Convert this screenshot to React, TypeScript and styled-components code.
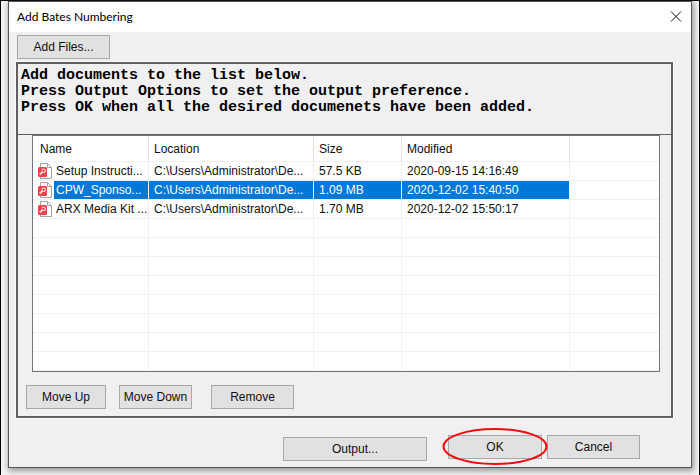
import React, { useState } from "react";
import styled, { createGlobalStyle } from "styled-components";

const GlobalStyle = createGlobalStyle`
  *, *::before, *::after { box-sizing: border-box; }
  body {
    margin: 0;
    background: #fff;
    color: #101010;
    font: 12px/16px "Liberation Sans", Arial, sans-serif;
  }
`;

const Desktop = styled.div`
  min-height: 100vh;
  padding: 0 7px 7px;
  display: flex;
  border: 1px solid #000;
  background: #f6f5f6;
`;

const Dialog = styled.main`
  flex: 1;
  min-width: 0;
  display: flex;
  flex-direction: column;
  background: #f0f0f0;
  border: 1px solid #58585a;
  box-shadow: 1px 2px 6px 1px rgba(60, 55, 60, 0.5);
`;

const TitleBar = styled.header`
  height: 30px;
  padding: 0 9px 0 8px;
  display: flex;
  align-items: center;
  justify-content: space-between;
  background: #fff;
`;

const Title = styled.h1`
  margin: 0;
  font: 400 12px/16px Lato, "Open Sans", sans-serif;
  color: #000;
`;

const CloseButton = styled.button`
  width: 12px;
  height: 12px;
  padding: 0;
  border: 0;
  display: flex;
  background: transparent;
`;

const Toolbar = styled.div`
  padding: 3px 8px;
  display: flex;
`;

const Button = styled.button<{ $width: number }>`
  width: ${(p) => p.$width}px;
  height: 24px;
  padding: 0;
  border: 1px solid #a8a8a8;
  background: #e1e1e1;
  color: #101010;
  font: inherit;
  white-space: nowrap;
`;

const Group = styled.section`
  margin: 0 18px 0 7px;
  border: 2px solid #606060;
  outline: 1px solid #fafafa;
`;

const Instructions = styled.p`
  margin: 0;
  padding: 4px 3px 18px;
  border-bottom: 1px solid #606060;
  color: #000;
  font: 700 15px/16px "Liberation Mono", "Courier New", monospace;
`;

const ListFrame = styled.div`
  margin: 0 11px 0 14px;
  border: 1px solid #72757f;
  background: #fff;
`;

const FileTable = styled.table`
  width: 100%;
  table-layout: fixed;
  border-collapse: separate;
  border-spacing: 0;
`;

const Column = styled.col<{ $width?: number }>`
  width: ${(p) => (p.$width ? `${p.$width}px` : "auto")};
`;

const HeadCell = styled.th`
  height: 26px;
  padding: 1px 5px 0;
  border-bottom: 1px solid #f0f0f0;
  border-right: 1px solid #e2e2e2;
  font-weight: 400;
  text-align: left;

  &:first-child { padding-left: 7px; }
`;

const Row = styled.tr<{ $selected?: boolean }>`
  color: ${(p) => (p.$selected ? "#fff" : "inherit")};
  --fill: ${(p) => (p.$selected ? "#0078d7" : "transparent")};
`;

const Cell = styled.td`
  height: 19px;
  padding: 0 0 0 5px;
  border-right: 1px solid #f0f0f0;
  border-bottom: 1px solid #f0f0f0;
  background: var(--fill);
  background-clip: padding-box;
  line-height: 18px;
  white-space: nowrap;
`;

const FillerCell = styled.td`
  border-bottom: 1px solid #f0f0f0;
`;

const NameCell = styled(Cell)`
  background: none;
`;

const NameContent = styled.div`
  display: flex;
  gap: 2px;
`;

const NameText = styled.span`
  flex: 1;
  padding-left: 2px;
  background: var(--fill);
`;

const ListActions = styled.div`
  padding: 13px 8px 7px;
  display: flex;
`;

const Gap = styled.span<{ $width: number }>`
  width: ${(p) => p.$width}px;
`;

const Footer = styled.footer`
  padding: 17px 51px 6px 0;
  display: flex;
  justify-content: flex-end;
`;

const OutputSlot = styled.div`
  margin: 2px 21px 0 0;
`;

const Highlighted = styled.div`
  position: relative;
  margin-right: 5px;
`;

const Ring = styled.svg`
  position: absolute;
  left: -6px;
  top: -8px;
  pointer-events: none;
`;

const PdfIcon = () => (
  <svg width="14" height="18" viewBox="0 0 14 18" aria-hidden="true">
    <path d="M2.5 1.5h7l4 4v11h-11z" fill="#fff" stroke="#a3a3a3" />
    <path d="M9.5 1.5v4h4" fill="none" stroke="#a3a3a3" />
    <rect x="0" y="5" width="9" height="10" rx="1.5" fill="#e9434a" />
    <path
      d="M3.8 7.2h1.9a1.6 1.6 0 0 1 0 3.4H3.4M4.1 8.6l-.7 3.2c-.3 1.2-1.7.9-1.5-.1.2-.7.9-1 1.8-1.1"
      fill="none"
      stroke="#fff"
      strokeWidth="1"
    />
  </svg>
);

const files = [
  { name: "Setup Instructi...", size: "57.5 KB", modified: "2020-09-15 14:16:49" },
  { name: "CPW_Sponso...", size: "1.09 MB", modified: "2020-12-02 15:40:50" },
  { name: "ARX Media Kit ...", size: "1.70 MB", modified: "2020-12-02 15:50:17" },
];
const location = "C:\\Users\\Administrator\\De...";
const emptyRows = Array.from({ length: 8 }, (_, i) => i);

export default function App() {
  const [selected, setSelected] = useState(1);

  return (
    <>
      <GlobalStyle />
      <Desktop>
        <Dialog aria-label="Add Bates Numbering">
          <TitleBar>
            <Title>Add Bates Numbering</Title>
            <CloseButton aria-label="Close">
              <svg width="12" height="12" viewBox="0 0 12 12">
                <path d="M1 0.5l10 10M11 0.5l-10 10" stroke="#111" fill="none" />
              </svg>
            </CloseButton>
          </TitleBar>
          <Toolbar>
            <Button $width={93}>Add Files...</Button>
          </Toolbar>
          <Group>
            <Instructions>
              Add documents to the list below.
              <br />
              Press Output Options to set the output preference.
              <br />
              Press OK when all the desired documenets have been added.
            </Instructions>
            <ListFrame>
              <FileTable>
                <colgroup>
                  <Column $width={116} />
                  <Column $width={165} />
                  <Column $width={88} />
                  <Column $width={168} />
                  <Column />
                </colgroup>
                <thead>
                  <tr>
                    <HeadCell>Name</HeadCell>
                    <HeadCell>Location</HeadCell>
                    <HeadCell>Size</HeadCell>
                    <HeadCell>Modified</HeadCell>
                    <FillerCell />
                  </tr>
                </thead>
                <tbody>
                  {files.map((file, i) => (
                    <Row key={file.name} $selected={i === selected} onClick={() => setSelected(i)}>
                      <NameCell>
                        <NameContent>
                          <PdfIcon />
                          <NameText>{file.name}</NameText>
                        </NameContent>
                      </NameCell>
                      <Cell>{location}</Cell>
                      <Cell>{file.size}</Cell>
                      <Cell>{file.modified}</Cell>
                      <FillerCell />
                    </Row>
                  ))}
                  {emptyRows.map((i) => (
                    <Row key={i}>
                      <Cell />
                      <Cell />
                      <Cell />
                      <Cell />
                      <FillerCell />
                    </Row>
                  ))}
                </tbody>
              </FileTable>
            </ListFrame>
            <ListActions>
              <Button $width={80}>Move Up</Button>
              <Gap $width={13} />
              <Button $width={73}>Move Down</Button>
              <Gap $width={19} />
              <Button $width={83}>Remove</Button>
            </ListActions>
          </Group>
          <Footer>
            <OutputSlot>
              <Button $width={144}>Output...</Button>
            </OutputSlot>
            <Highlighted>
              <Button $width={94}>OK</Button>
              <Ring width="106" height="39" viewBox="0 0 106 39" aria-hidden="true">
                <ellipse cx="53" cy="19.5" rx="51.5" ry="17.5" fill="none" stroke="#f5080c" strokeWidth="2" />
              </Ring>
            </Highlighted>
            <Button $width={93}>Cancel</Button>
          </Footer>
        </Dialog>
      </Desktop>
    </>
  );
}
